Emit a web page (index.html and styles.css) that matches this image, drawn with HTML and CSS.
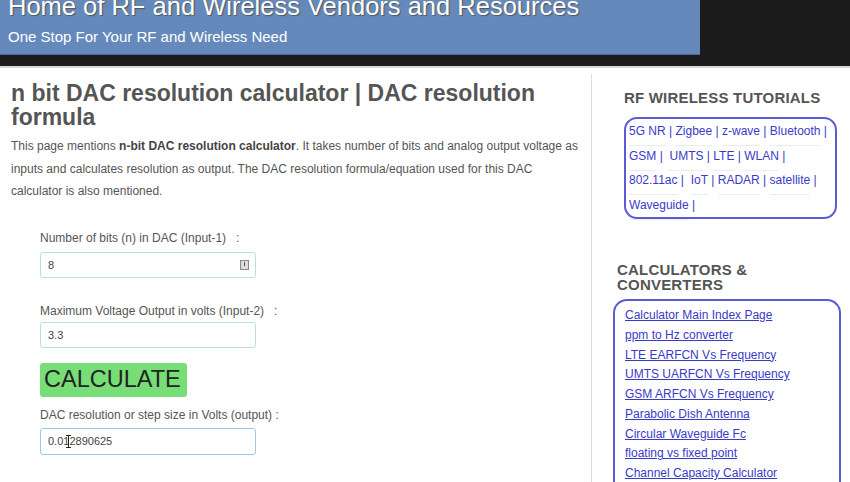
FILE: index.html
```html
<!DOCTYPE html>
<html>
<head>
<meta charset="utf-8">
<link rel="stylesheet" href="styles.css">
</head>
<body>
<header class="topbar">
  <div class="brand">
    <div class="brand-title">Home of RF and Wireless Vendors and Resources</div>
    <div class="brand-sub">One Stop For Your RF and Wireless Need</div>
  </div>
</header>
<div class="page">
  <main class="content">
    <h1>n bit DAC resolution calculator | DAC resolution formula</h1>
    <p class="intro">This page mentions <b>n-bit DAC resolution calculator</b>. It takes number of bits and analog output voltage as inputs and calculates resolution as output. The DAC resolution formula/equation used for this DAC calculator is also mentioned.</p>
    <form class="calc">
      <label class="lbl">Number of bits (n) in DAC (Input-1)&nbsp;&nbsp; :</label>
      <div class="field"><span>8</span><span class="spin"></span></div>
      <label class="lbl lbl-2">Maximum Voltage Output in volts (Input-2)&nbsp;&nbsp; :</label>
      <div class="field"><span>3.3</span></div>
      <button type="button" class="btn">CALCULATE</button>
      <label class="lbl lbl-out">DAC resolution or step size in Volts (output) :</label>
      <div class="field field-out"><span>0.012890625</span><span class="ibeam"></span></div>
    </form>
  </main>
  <aside class="side">
    <section class="tut">
      <h3 class="side-h">RF WIRELESS TUTORIALS</h3>
      <div class="tut-box">
        <div class="row"><a>5G NR</a> | <a>Zigbee</a> | <a>z-wave</a> | <a>Bluetooth</a> |</div>
        <div class="row"><a>GSM</a> | &nbsp;<a>UMTS</a> | <a>LTE</a> | <a>WLAN</a> |</div>
        <div class="row"><a>802.11ac</a> | &nbsp;<a>IoT</a> | <a>RADAR</a> | <a>satellite</a> |</div>
        <div class="row"><a>Waveguide</a> |</div>
      </div>
    </section>
    <section class="conv">
      <h3 class="side-h conv-h">CALCULATORS &amp;<br>CONVERTERS</h3>
      <div class="conv-box">
        <a>Calculator Main Index Page</a>
        <a>ppm to Hz converter</a>
        <a>LTE EARFCN Vs Frequency</a>
        <a>UMTS UARFCN Vs Frequency</a>
        <a>GSM ARFCN Vs Frequency</a>
        <a>Parabolic Dish Antenna</a>
        <a>Circular Waveguide Fc</a>
        <a>floating vs fixed point</a>
        <a>Channel Capacity Calculator</a>
      </div>
    </section>
  </aside>
</div>
</body>
</html>
```

FILE: styles.css
```css
html, body {
  margin: 0;
  padding: 0;
  background: #fff;
  font-family: "Liberation Sans", Arial, sans-serif;
  overflow: hidden;
}
.topbar {
  background: #1c1c1c;
  height: 66px;
  border-bottom: 2px solid #d8d8d8;
}
.brand {
  width: 700px;
  height: 55px;
  background: #6589bb;
  border-bottom: 1px solid #4d6a92;
  box-sizing: border-box;
  overflow: hidden;
}
.brand-title {
  color: #fff;
  font-size: 25.5px;
  line-height: 28px;
  margin-top: -8px;
  padding-left: 8px;
  text-shadow: 1px 1px 1px #555;
}
.brand-sub {
  color: #fff;
  font-size: 15px;
  line-height: 18px;
  padding-left: 8px;
  margin-top: 8px;
}
.page {
  display: flex;
}
.content {
  width: 592px;
  box-sizing: border-box;
  padding: 7px 0 0 11px;
  border-right: 1px solid #dcdcdc;
  margin-top: 6px;
  height: 420px;
}
h1 {
  margin: 0;
  font-size: 23px;
  line-height: 24px;
  color: #555;
  font-weight: bold;
}
.intro {
  margin: 6px 0 0;
  font-size: 12px;
  line-height: 22.5px;
  color: #555;
  padding-right: 8px;
}
.intro b { color: #444; }
.calc {
  padding-left: 29px;
  margin-top: 27px;
  display: flex;
  flex-direction: column;
  align-items: flex-start;
}
.lbl {
  font-size: 12px;
  color: #555;
  line-height: 16px;
  margin-bottom: 6px;
  white-space: pre;
}
.lbl-2 { margin-bottom: 3px; }
.field {
  width: 216px;
  height: 26px;
  box-sizing: border-box;
  border: 1px solid #b6e3d6;
  border-radius: 3px;
  display: flex;
  align-items: center;
  justify-content: space-between;
  padding: 0 6px 0 7px;
  font-size: 11px;
  color: #444;
  margin-bottom: 25px;
  position: relative;
}
.spin {
  width: 7px;
  height: 8px;
  border: 1px solid #888;
  background: #ddd;
  position: relative;
}
.spin::after {
  content: "";
  position: absolute;
  left: 3px;
  top: 1px;
  width: 1px;
  height: 4px;
  background: #555;
}
.btn {
  background: #77dd77;
  border: none;
  border-radius: 3px;
  font-family: "Liberation Sans", Arial, sans-serif;
  font-size: 23.5px;
  color: #222;
  padding: 0 4px;
  height: 34px;
  width: 147px;
  text-align: left;
  margin-top: -10px;
  margin-bottom: 10px;
}
.lbl-out { margin-bottom: 5px; }
.field-out {
  border-color: #9ec8ea;
  height: 27px;
}
.ibeam {
  position: absolute;
  left: 27px;
  top: 6px;
  width: 1px;
  height: 13px;
  background: #222;
}
.ibeam::before, .ibeam::after {
  content: "";
  position: absolute;
  left: -2px;
  width: 5px;
  height: 1px;
  background: #222;
}
.ibeam::before { top: 0; }
.ibeam::after { bottom: 0; }
.side {
  flex: 1;
  position: relative;
}
.side-h {
  margin: 0;
  font-size: 15px;
  color: #555;
  font-weight: bold;
  letter-spacing: 0.2px;
}
.tut {
  padding: 21px 0 0 32px;
}
.tut .side-h {
  line-height: 18px;
}
.tut-box {
  margin-top: 10px;
  width: 213px;
  box-sizing: border-box;
  border: 2px solid #5b5bd6;
  border-radius: 13px;
  padding: 0 0 0 3px;
  font-size: 12px;
  color: #3a3ac8;
}
.row {
  line-height: 24.5px;
  height: 24.5px;
}
.tut-box a {
  color: #3a3ac8;
  display: inline-block;
  line-height: 19px;
  border-bottom: 1px solid #ececec;
  padding-bottom: 4px;
}
.conv {
  padding: 43px 0 0 25px;
}
.conv .side-h {
  line-height: 15px;
}
.conv-box {
  margin-top: 7px;
  margin-left: -4px;
  width: 228px;
  height: 200px;
  box-sizing: border-box;
  border: 2px solid #5b5bd6;
  border-bottom: none;
  border-radius: 14px 14px 0 0;
  padding: 5px 0 0 10px;
  display: flex;
  flex-direction: column;
}
.conv-box a {
  color: #3a3ac8;
  font-size: 12px;
  line-height: 19.75px;
  text-decoration: underline;
}
```
